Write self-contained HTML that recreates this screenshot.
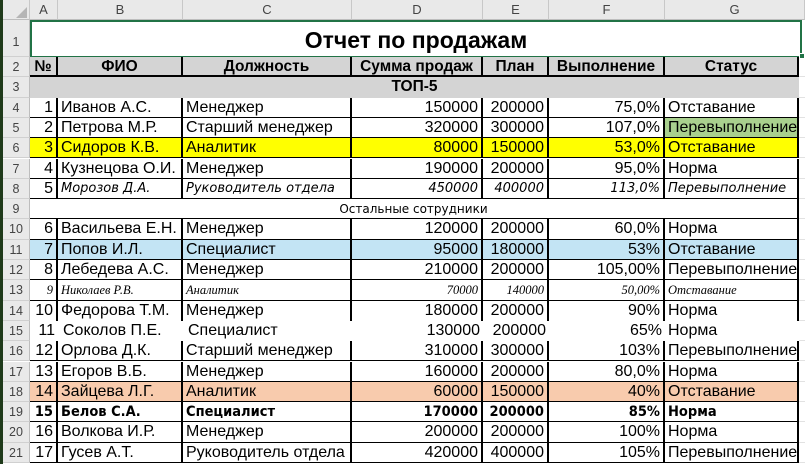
<!DOCTYPE html>
<html><head><meta charset="utf-8"><style>
*{box-sizing:border-box;margin:0;padding:0}
body{width:805px;height:464px;overflow:hidden;background:#fff;font-family:"Liberation Sans",Arial,sans-serif;position:relative}
.strip{position:absolute;left:0;top:0;width:3px;height:464px;background:#1f3a1a}
.ch{position:absolute;top:0;height:20px;background:#e9e9e9;border-right:1px solid #c8c8c8;border-bottom:1px solid #bdbdbd;color:#444;font-size:13px;text-align:center;line-height:20px}
.r{position:absolute;left:3px;width:802px;height:20.3px;display:flex}
.r>div{height:100%;overflow:hidden;white-space:nowrap;font-size:16px;line-height:20px;color:#000}
.rh{width:27px;background:#e9e9e9;color:#444!important;font-size:12.5px!important;text-align:center;border-right:1px solid #bdbdbd;border-bottom:1px solid #d0d0d0}
.a{width:28px}.b{width:125px}.c{width:169px}.d{width:131px}.e{width:66px}.f{width:116px}.g{width:134px}.x{width:6px;border-bottom:1px solid #e2e2e2}
.r .n{text-align:right;padding-right:3px}
.r .t{padding-left:3px}
.v>div:not(.rh):not(.x):not(.nb){border-right:2px solid #000;border-bottom:1px solid #000}
.hd>div:not(.rh):not(.x){background:#d4d4d4;font-weight:bold;text-align:center;font-size:15.5px;border-right:2px solid #000;border-bottom:2px solid #000}
.y>div:not(.rh):not(.x){background:#ffff00}
.bl>div:not(.rh):not(.x){background:#c3e4f4}
.sa>div:not(.rh):not(.x){background:#f8cbad}
.f8>div:not(.rh){font-family:"DejaVu Sans",sans-serif;font-style:italic;font-size:13px}
.f13>div:not(.rh){font-family:"Liberation Serif",serif;font-style:italic;font-size:12.5px}
.f19>div:not(.rh){font-family:"DejaVu Sans Condensed","DejaVu Sans",sans-serif;font-weight:bold;font-size:14.5px}
</style></head><body>
<div class="strip"></div>
<div class="ch" style="left:3px;width:27px"></div>
<div style="position:absolute;left:16px;top:7px;width:0;height:0;border-left:11px solid transparent;border-bottom:11px solid #b5b5b5"></div>
<div class="ch" style="left:30px;width:28px">A</div>
<div class="ch" style="left:58px;width:125px">B</div>
<div class="ch" style="left:183px;width:169px">C</div>
<div class="ch" style="left:352px;width:131px">D</div>
<div class="ch" style="left:483px;width:66px">E</div>
<div class="ch" style="left:549px;width:116px">F</div>
<div class="ch" style="left:665px;width:140px">G</div>
<div style="position:absolute;left:3px;top:20px;width:27px;height:37px;background:#e9e9e9;border-right:1px solid #bdbdbd;border-bottom:1px solid #d0d0d0;color:#444;font-size:12.5px;text-align:center;line-height:44px">1</div>
<div style="position:absolute;left:30px;top:20px;width:772px;height:38px;border:2px solid #217346;font-weight:bold;font-size:23px;text-align:center;line-height:36px">Отчет по продажам</div>
<div style="position:absolute;left:799px;top:53px;width:6px;height:6px;background:#217346;border:1px solid #fff"></div>

<div class="r hd" style="top:57px"><div class="rh">2</div><div class="a">№</div><div class="b">ФИО</div><div class="c">Должность</div><div class="d">Сумма продаж</div><div class="e">План</div><div class="f">Выполнение</div><div class="g">Статус</div><div class="x"></div></div>
<div class="r" style="top:77.3px"><div class="rh">3</div><div style="width:769px;background:#d4d4d4;font-weight:bold;font-size:15.5px;text-align:center;padding-left:0">ТОП-5</div><div class="x"></div></div>
<div class="r v" style="top:97.6px"><div class="rh">4</div><div class="a n">1</div><div class="b t">Иванов А.С.</div><div class="c t">Менеджер</div><div class="d n">150000</div><div class="e n">200000</div><div class="f n">75,0%</div><div class="g t">Отставание</div><div class="x"></div></div>
<div class="r v" style="top:117.9px"><div class="rh">5</div><div class="a n">2</div><div class="b t">Петрова М.Р.</div><div class="c t">Старший менеджер</div><div class="d n">320000</div><div class="e n">300000</div><div class="f n">107,0%</div><div class="g t" style="background:#a9d08e">Перевыполнение</div><div class="x"></div></div>
<div class="r v y" style="top:138.2px"><div class="rh">6</div><div class="a n">3</div><div class="b t">Сидоров К.В.</div><div class="c t">Аналитик</div><div class="d n">80000</div><div class="e n">150000</div><div class="f n">53,0%</div><div class="g t">Отставание</div><div class="x"></div></div>
<div class="r v" style="top:158.5px"><div class="rh">7</div><div class="a n">4</div><div class="b t">Кузнецова О.И.</div><div class="c t">Менеджер</div><div class="d n">190000</div><div class="e n">200000</div><div class="f n">95,0%</div><div class="g t">Норма</div><div class="x"></div></div>
<div class="r v f8" style="top:178.8px"><div class="rh">8</div><div class="a n" style="font-family:'Liberation Sans';font-style:normal;font-size:16px">5</div><div class="b t">Морозов Д.А.</div><div class="c t">Руководитель отдела</div><div class="d n">450000</div><div class="e n">400000</div><div class="f n">113,0%</div><div class="g t">Перевыполнение</div><div class="x"></div></div>
<div class="r f8" style="top:199.1px"><div class="rh" style="font-style:normal">9</div><div style="width:769px;text-align:center;font-style:normal;font-size:12px;border-right:2px solid #000;border-bottom:1px solid #000">Остальные сотрудники</div><div class="x"></div></div>
<div class="r v" style="top:219.4px"><div class="rh">10</div><div class="a n">6</div><div class="b t">Васильева Е.Н.</div><div class="c t">Менеджер</div><div class="d n">120000</div><div class="e n">200000</div><div class="f n">60,0%</div><div class="g t">Норма</div><div class="x"></div></div>
<div class="r v bl" style="top:239.7px"><div class="rh">11</div><div class="a n">7</div><div class="b t">Попов И.Л.</div><div class="c t">Специалист</div><div class="d n">95000</div><div class="e n">180000</div><div class="f n">53%</div><div class="g t">Отставание</div><div class="x"></div></div>
<div class="r v" style="top:260px"><div class="rh">12</div><div class="a n">8</div><div class="b t">Лебедева А.С.</div><div class="c t">Менеджер</div><div class="d n">210000</div><div class="e n">200000</div><div class="f n">105,00%</div><div class="g t">Перевыполнение</div><div class="x"></div></div>
<div class="r v f13" style="top:280.3px"><div class="rh" style="font-style:normal">13</div><div class="a n">9</div><div class="b t">Николаев Р.В.</div><div class="c t">Аналитик</div><div class="d n">70000</div><div class="e n">140000</div><div class="f n">50,00%</div><div class="g t">Отставание</div><div class="x"></div></div>
<div class="r" style="top:300.6px"><div class="rh">14</div><div class="a n" style="border-right:2px solid #000">10</div><div class="b t" style="border-right:2px solid #000">Федорова Т.М.</div><div class="c t" style="border-right:2px solid #000">Менеджер</div><div class="d n" style="border-right:2px solid #000">180000</div><div class="e n" style="border-right:2px solid #000">200000</div><div class="f n" style="border-right:2px solid #000">90%</div><div class="g t" style="border-right:2px solid #000">Норма</div><div class="x"></div></div>
<div class="r" style="top:320.9px"><div class="rh">15</div><div class="a n">11</div><div class="b t" style="padding-left:5px">Соколов П.Е.</div><div class="c t" style="padding-left:5px">Специалист</div><div class="d n">130000</div><div class="e n">200000</div><div class="f n">65%</div><div class="g t">Норма</div><div class="x"></div></div>
<div class="r v" style="top:341.2px"><div class="rh">16</div><div class="a n">12</div><div class="b t">Орлова Д.К.</div><div class="c t">Старший менеджер</div><div class="d n">310000</div><div class="e n">300000</div><div class="f n">103%</div><div class="g t">Перевыполнение</div><div class="x"></div></div>
<div class="r v" style="top:361.5px"><div class="rh">17</div><div class="a n">13</div><div class="b t">Егоров В.Б.</div><div class="c t">Менеджер</div><div class="d n">160000</div><div class="e n">200000</div><div class="f n">80,0%</div><div class="g t">Норма</div><div class="x"></div></div>
<div class="r v sa" style="top:381.8px"><div class="rh">18</div><div class="a n">14</div><div class="b t">Зайцева Л.Г.</div><div class="c t">Аналитик</div><div class="d n">60000</div><div class="e n">150000</div><div class="f n">40%</div><div class="g t">Отставание</div><div class="x"></div></div>
<div class="r v f19" style="top:402.1px"><div class="rh" style="font-weight:normal;font-family:'Liberation Sans'">19</div><div class="a n">15</div><div class="b t">Белов С.А.</div><div class="c t">Специалист</div><div class="d n">170000</div><div class="e n">200000</div><div class="f n">85%</div><div class="g t">Норма</div><div class="x"></div></div>
<div class="r v" style="top:422.4px"><div class="rh">20</div><div class="a n">16</div><div class="b t">Волкова И.Р.</div><div class="c t">Менеджер</div><div class="d n">200000</div><div class="e n">200000</div><div class="f n">100%</div><div class="g t">Норма</div><div class="x"></div></div>
<div class="r v" style="top:442.7px"><div class="rh">21</div><div class="a n">17</div><div class="b t">Гусев А.Т.</div><div class="c t">Руководитель отдела</div><div class="d n">420000</div><div class="e n">400000</div><div class="f n">105%</div><div class="g t">Перевыполнение</div><div class="x"></div></div>
</body></html>
